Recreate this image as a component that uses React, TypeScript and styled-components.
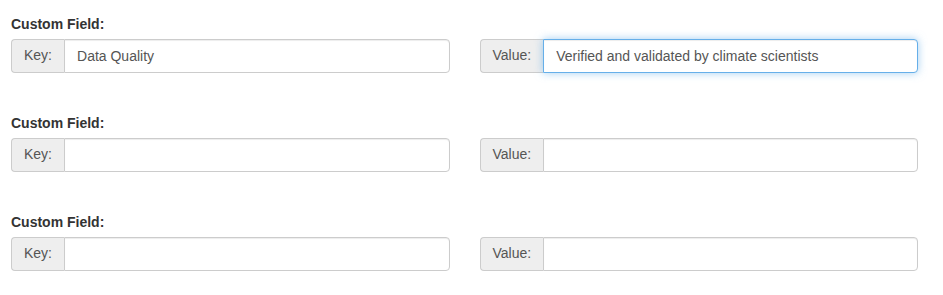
import React from "react";
import styled, { createGlobalStyle, css } from "styled-components";

const GlobalStyle = createGlobalStyle`
  html, body { margin: 0; padding: 0; background: #fff; }
  body {
    font-family: "Liberation Sans", Arial, Helvetica, sans-serif;
    font-size: 14px;
    line-height: 1.42857;
    color: #333;
  }
  * { box-sizing: border-box; }
`;

const Page = styled.div`
  display: flex;
  flex-direction: column;
  gap: 40px;
  padding: 14px 25px 0 11px;
`;

const FieldRow = styled.div`
  display: flex;
  flex-direction: column;
`;

const Label = styled.label`
  display: block;
  font-weight: bold;
  font-size: 14px;
  line-height: 20px;
  margin-bottom: 5px;
  color: #333;
`;

const Columns = styled.div`
  display: flex;
  gap: 30px;
`;

const InputGroup = styled.div`
  flex: 1;
  display: flex;
  height: 34px;
`;

const Addon = styled.span`
  display: flex;
  align-items: center;
  padding: 6px 12px;
  font-size: 14px;
  color: #555;
  background: #eee;
  border: 1px solid #ccc;
  border-right: 0;
  border-radius: 4px 0 0 4px;
  white-space: nowrap;
`;

const Input = styled.input<{ $focused?: boolean }>`
  flex: 1;
  min-width: 0;
  height: 34px;
  padding: 6px 12px;
  font-family: inherit;
  font-size: 14px;
  color: #555;
  background: #fff;
  border: 1px solid #ccc;
  border-radius: 0 4px 4px 0;
  box-shadow: inset 0 1px 1px rgba(0, 0, 0, 0.075);
  outline: none;
  ${(p) =>
    p.$focused &&
    css`
      border-color: #66afe9;
      box-shadow: inset 0 1px 1px rgba(0, 0, 0, 0.075),
        0 0 8px rgba(102, 175, 233, 0.6);
    `}
`;

const fields = [
  { key: "Data Quality", value: "Verified and validated by climate scientists", focus: true },
  { key: "", value: "", focus: false },
  { key: "", value: "", focus: false },
];

export default function App() {
  return (
    <>
      <GlobalStyle />
      <Page>
        {fields.map((f, i) => (
          <FieldRow key={i}>
            <Label>Custom Field:</Label>
            <Columns>
              <InputGroup>
                <Addon>Key:</Addon>
                <Input defaultValue={f.key} />
              </InputGroup>
              <InputGroup>
                <Addon>Value:</Addon>
                <Input defaultValue={f.value} $focused={f.focus} />
              </InputGroup>
            </Columns>
          </FieldRow>
        ))}
      </Page>
    </>
  );
}
